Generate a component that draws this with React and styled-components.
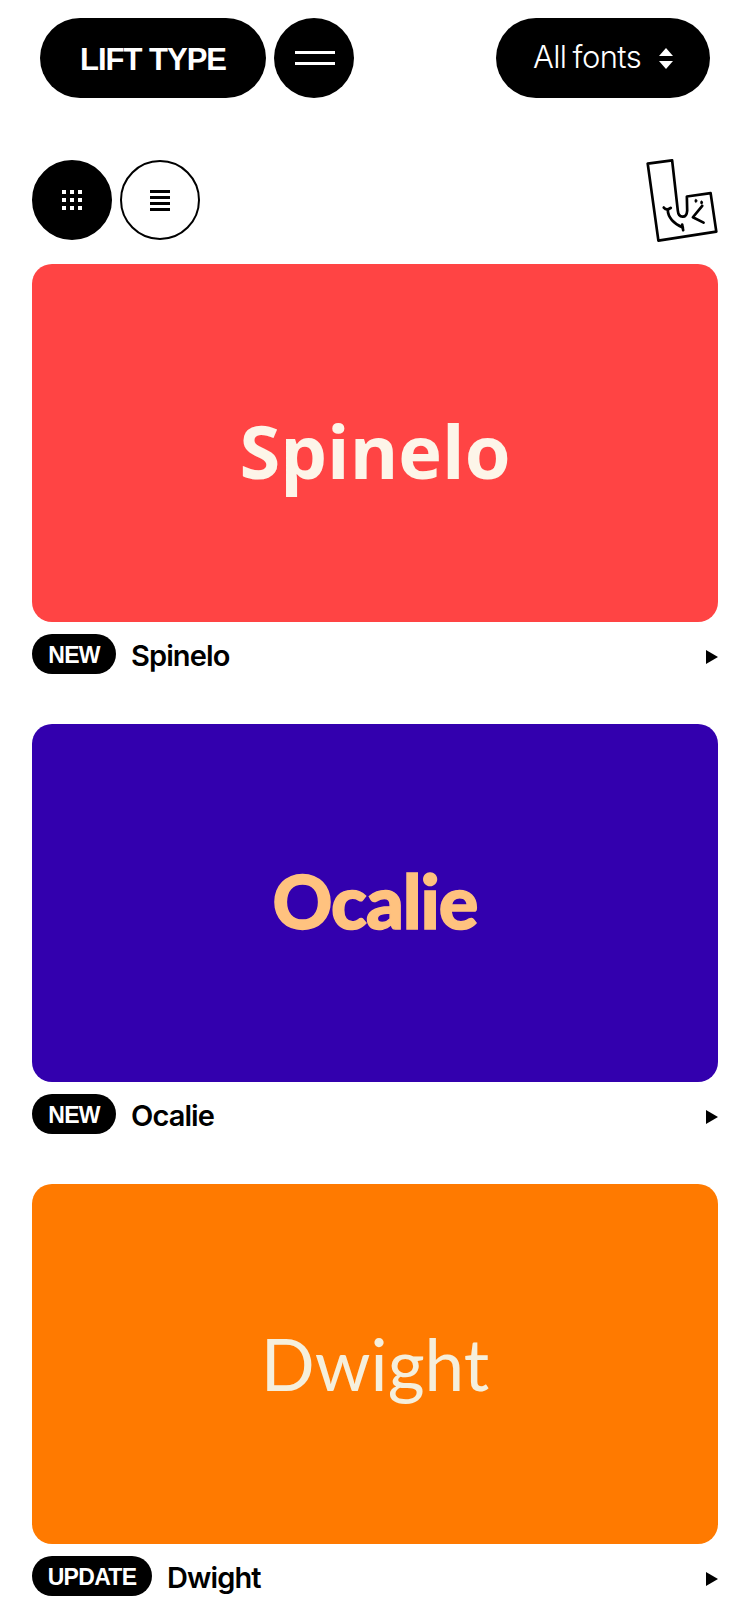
import React from 'react';
import styled, { createGlobalStyle } from 'styled-components';

const GlobalStyle = createGlobalStyle`
  html, body {
    margin: 0;
    padding: 0;
    background: #fff;
    font-family: "Inter", "Liberation Sans", sans-serif;
    color: #000;
  }
`;

const Page = styled.div`
  width: 750px;
  height: 1624px;
  overflow: hidden;
  box-sizing: border-box;
`;

const Header = styled.header`
  display: flex;
  justify-content: space-between;
  padding: 18px 40px 0;
`;

const HeaderLeft = styled.div`
  display: flex;
  gap: 8px;
`;

const Pill = styled.button`
  display: flex;
  align-items: center;
  justify-content: center;
  height: 80px;
  width: ${props => props.$width}px;
  border: 0;
  padding: 0;
  border-radius: 40px;
  background: #000;
  color: #fff;
  font-family: "Liberation Sans", sans-serif;
`;

const Logo = styled(Pill)`
  padding-top: 3px;
  font-size: 31px;
  font-weight: 700;
  letter-spacing: -1px;
`;

const Menu = styled(Pill)`
  padding-left: 2px;
`;

const Filter = styled(Pill)`
  gap: 18px;
  font-family: "Inter", sans-serif;
  font-size: 31px;
  font-weight: 300;
  letter-spacing: -0.6px;
  word-spacing: -2px;
`;

const FilterLabel = styled.span`
  margin-top: -3px;
`;

const Round = styled.button`
  display: flex;
  align-items: center;
  justify-content: center;
  width: 80px;
  height: 80px;
  box-sizing: border-box;
  padding: 0;
  border-radius: 50%;
  border: 2px solid #000;
  background: ${props => (props.$active ? '#000' : '#fff')};
`;

const ViewRow = styled.div`
  display: flex;
  align-items: center;
  justify-content: space-between;
  margin-top: 62px;
  padding: 0 32px;
`;

const Toggles = styled.div`
  display: flex;
  gap: 8px;
`;

const MascotSvg = styled.svg`
  display: block;
  margin: -2px 0;
`;

const List = styled.main`
  display: flex;
  flex-direction: column;
  gap: 50px;
  margin-top: 24px;
  padding: 0 32px;
`;

const Preview = styled.div`
  display: flex;
  align-items: center;
  justify-content: center;
  height: ${props => props.$height}px;
  box-sizing: border-box;
  border-radius: 20px;
  background: ${props => props.$bg};
  color: ${props => props.$fg};
  font-family: ${props => props.$font};
  font-size: ${props => props.$size}px;
  font-weight: ${props => props.$weight};
  letter-spacing: ${props => props.$spacing}px;
  padding-top: ${props => props.$drop}px;
  padding-bottom: ${props => props.$lift}px;
  -webkit-text-stroke: ${props => props.$stroke}px ${props => props.$fg};
`;

const Meta = styled.div`
  display: flex;
  align-items: center;
  gap: 15px;
  height: 40px;
  margin-top: 12px;
`;

const Badge = styled.span`
  display: flex;
  align-items: center;
  justify-content: center;
  height: 40px;
  box-sizing: border-box;
  padding-top: 3px;
  width: ${props => props.$width}px;
  border-radius: 20px;
  background: #000;
  color: #fff;
  font-family: "Liberation Sans", sans-serif;
  font-size: 23px;
  font-weight: 700;
  letter-spacing: -0.7px;
`;

const Name = styled.span`
  flex: 1;
  padding-top: 3px;
  font-size: 29px;
  font-weight: 600;
  letter-spacing: -0.9px;
`;

const Arrow = styled.svg`
  display: block;
  width: 12px;
  height: 14px;
  margin-top: 6px;
  fill: #000;
`;

const fonts = [
  {
    name: 'Spinelo', tag: 'NEW', tagWidth: 84, height: 358, bg: '#ff4444', fg: '#fdf5e9',
    font: '"Open Sans", sans-serif', size: 74, weight: 700, spacing: 0, drop: 14, lift: 0, stroke: 0
  },
  {
    name: 'Ocalie', tag: 'NEW', tagWidth: 84, height: 358, bg: '#3300ae', fg: '#ffc27f',
    font: '"Lato", sans-serif', size: 74, weight: 900, spacing: -1, drop: 0, lift: 6, stroke: 1.5
  },
  {
    name: 'Dwight', tag: 'UPDATE', tagWidth: 120, height: 360, bg: '#ff7a00', fg: '#f5efdc',
    font: '"Lato", sans-serif', size: 71, weight: 400, spacing: 0, drop: 0, lift: 2, stroke: 0
  }
];

function Bars() {
  return (
    <svg width="40" height="14" viewBox="0 0 40 14" fill="#fff">
      <rect x="0" y="0" width="40" height="3" />
      <rect x="0" y="11" width="40" height="3" />
    </svg>
  );
}

function UpDown() {
  return (
    <svg width="14" height="21" viewBox="0 0 14 21" fill="#fff">
      <path d="M7 0 L14 8 H0 Z" />
      <path d="M0 13 H14 L7 21 Z" />
    </svg>
  );
}

function GridIcon() {
  var dots = [];
  for (var row = 0; row < 3; row++) {
    for (var col = 0; col < 3; col++) {
      dots.push(<rect key={row + '-' + col} x={col * 8} y={row * 8} width="4" height="4" />);
    }
  }
  return <svg width="20" height="20" viewBox="0 0 20 20" fill="#fff">{dots}</svg>;
}

function ListIcon() {
  return (
    <svg width="20" height="21" viewBox="0 0 20 21" fill="#000">
      <rect x="0" y="0" width="20" height="3" />
      <rect x="0" y="6" width="20" height="3" />
      <rect x="0" y="12" width="20" height="3" />
      <rect x="0" y="18" width="20" height="3" />
    </svg>
  );
}

function Mascot() {
  return (
    <MascotSvg width="72" height="83" viewBox="75 38 215 248" fill="none" stroke="#000" strokeWidth="8" strokeLinecap="round" strokeLinejoin="round">
      <path d="M80 52 L153 42 L170 192 C172 215 196 218 198 192 L197 150 L268 140 L285 255 L112 282 Z" />
      <path d="M243 178 L215 212 L247 228" />
      <path d="M128 183 C134 190 142 190 149 184" />
      <path d="M140 190 C140 212 158 232 185 243" />
      <path d="M183 234 L186 251" />
      <ellipse cx="224" cy="163" rx="3" ry="5" fill="#000" strokeWidth="2" />
      <ellipse cx="241" cy="168" rx="3" ry="5" fill="#000" strokeWidth="2" />
    </MascotSvg>
  );
}

function FontCard({ item }) {
  return (
    <article>
      <Preview
        $height={item.height}
        $bg={item.bg}
        $fg={item.fg}
        $font={item.font}
        $size={item.size}
        $weight={item.weight}
        $spacing={item.spacing}
        $drop={item.drop}
        $lift={item.lift}
        $stroke={item.stroke}
      >
        {item.name}
      </Preview>
      <Meta>
        <Badge $width={item.tagWidth}>{item.tag}</Badge>
        <Name>{item.name}</Name>
        <Arrow viewBox="0 0 12 14"><path d="M0 0 L12 7 L0 14 Z" /></Arrow>
      </Meta>
    </article>
  );
}

export default function App() {
  return (
    <Page>
      <GlobalStyle />
      <Header>
        <HeaderLeft>
          <Logo $width={226}>LIFT TYPE</Logo>
          <Menu $width={80}><Bars /></Menu>
        </HeaderLeft>
        <Filter $width={214}><FilterLabel>All fonts</FilterLabel> <UpDown /></Filter>
      </Header>
      <ViewRow>
        <Toggles>
          <Round $active><GridIcon /></Round>
          <Round><ListIcon /></Round>
        </Toggles>
        <Mascot />
      </ViewRow>
      <List>
        {fonts.map(item => <FontCard key={item.name} item={item} />)}
      </List>
    </Page>
  );
}
